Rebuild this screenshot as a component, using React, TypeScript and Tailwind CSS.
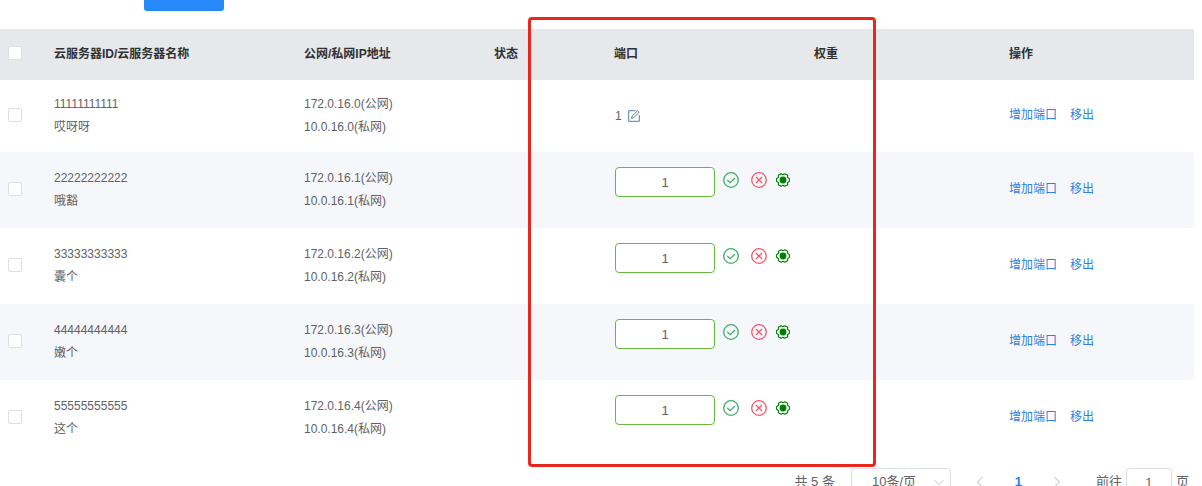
import type { ReactNode } from "react";

type Server = {
  id: string;
  name: string;
  publicIp: string;
  privateIp: string;
  editing: boolean;
};

const SERVERS: Server[] = [
  { id: "11111111111", name: "哎呀呀", publicIp: "172.0.16.0", privateIp: "10.0.16.0", editing: false },
  { id: "22222222222", name: "哦豁", publicIp: "172.0.16.1", privateIp: "10.0.16.1", editing: true },
  { id: "33333333333", name: "囊个", publicIp: "172.0.16.2", privateIp: "10.0.16.2", editing: true },
  { id: "44444444444", name: "嫩个", publicIp: "172.0.16.3", privateIp: "10.0.16.3", editing: true },
  { id: "55555555555", name: "这个", publicIp: "172.0.16.4", privateIp: "10.0.16.4", editing: true },
];

function Checkbox({ label }: { label: string }) {
  return (
    <input
      type="checkbox"
      aria-label={label}
      className="block size-3.5 appearance-none rounded-xs border border-[#dcdfe6] bg-white checked:border-[#2788f8] checked:bg-[#2788f8]"
    />
  );
}

function IconButton({ label, className, children }: { label: string; className: string; children: ReactNode }) {
  return (
    <button type="button" aria-label={label} className={className}>
      {children}
    </button>
  );
}

function EditIcon() {
  return (
    <svg viewBox="0 0 12 12" className="size-3" fill="none" stroke="currentColor">
      <path d="M7.500 .7H.7v10.600h10.600V5" />
      <path d="M3.500 8.500l.6-2.400L9.500.8l1.600 1.500-5.400 5.500z" />
    </svg>
  );
}

function CheckIcon() {
  return (
    <svg viewBox="0 0 16 16" className="size-4" fill="none" stroke="currentColor" strokeWidth="1.3">
      <circle cx="8" cy="8" r="7.300" />
      <path d="M4.300 8l2.900 2.700 4.800-4.700" />
    </svg>
  );
}

function CrossIcon() {
  return (
    <svg viewBox="0 0 16 16" className="size-4" fill="none" stroke="currentColor" strokeWidth="1.3">
      <circle cx="8" cy="8" r="7.300" />
      <path d="M5 5l6 6M11 5l-6 6" />
    </svg>
  );
}

function GearIcon() {
  return (
    <svg viewBox="0 0 16 16" className="size-4" fill="none" stroke="currentColor" strokeWidth="1.1" strokeLinejoin="round">
      <path d="M14.400 6.400v3.200l-1.800 1v2.100l-2.800 1.600L8 13.200l-1.800 1.100-2.800-1.600v-2.100l-1.800-1V6.400l1.800-1V3.300l2.800-1.600L8 2.800l1.800-1.100 2.800 1.600v2.100z" />
      <circle cx="8" cy="8" r="3.400" fill="currentColor" stroke="none" />
    </svg>
  );
}

function PortCell({ server }: { server: Server }) {
  if (!server.editing) {
    return (
      <div className="flex items-center gap-1.5">
        <span>1</span>
        <IconButton label="编辑端口" className="text-[#5580a8]">
          <EditIcon />
        </IconButton>
      </div>
    );
  }

  return (
    <div className="mb-4 flex items-center">
      <input
        type="text"
        defaultValue="1"
        aria-label={`${server.id} 端口`}
        className="h-[30px] w-[100px] rounded border border-[#67b83c] bg-white text-center text-[13px] text-[#606266]"
      />
      <div className="flex items-center pb-1 pl-2">
        <IconButton label="确认" className="mr-3 text-[#3fae68]">
          <CheckIcon />
        </IconButton>
        <IconButton label="取消" className="mr-2 text-[#f5566c]">
          <CrossIcon />
        </IconButton>
        <IconButton label="设置" className="text-[#008000]">
          <GearIcon />
        </IconButton>
      </div>
    </div>
  );
}

function ServerTable() {
  return (
    <table className="w-full table-fixed border-collapse text-left text-xs text-[#606266]">
      <colgroup>
        <col className="w-[44px]" />
        <col className="w-[250px]" />
        <col className="w-[190px]" />
        <col className="w-[120px]" />
        <col className="w-[200px]" />
        <col />
        <col />
      </colgroup>
      <thead className="bg-[#e6e8eb] text-[#303133]">
        <tr className="h-[51px]">
          <th className="pb-1 pl-2">
            <Checkbox label="全选" />
          </th>
          <th className="px-2.5 pb-0.5">云服务器ID/云服务器名称</th>
          <th className="px-2.5 pb-0.5">公网/私网IP地址</th>
          <th className="px-2.5 pb-0.5">状态</th>
          <th className="px-2.5 pb-0.5">端口</th>
          <th className="px-2.5 pb-0.5">权重</th>
          <th className="px-2.5 pb-0.5">操作</th>
        </tr>
      </thead>
      <tbody>
        {SERVERS.map((s) => (
          <tr key={s.id} className={s.editing ? "h-[76px] even:bg-[#f5f7fb]" : "h-[72px]"}>
            <td className="pb-0.5 pl-2">
              <Checkbox label={s.name} />
            </td>
            <td className="px-2.5 leading-[23px]">
              <div>{s.id}</div>
              <div>{s.name}</div>
            </td>
            <td className="px-2.5 leading-[23px]">
              <div>{s.publicIp}(公网)</div>
              <div>{s.privateIp}(私网)</div>
            </td>
            <td />
            <td className="pl-[11px]">
              <PortCell server={s} />
            </td>
            <td />
            <td className="px-2.5 pb-0.5">
              <div className="flex gap-[13px] text-[#2f80e4]">
                <a href="#add-port">增加端口</a>
                <a href="#remove">移出</a>
              </div>
            </td>
          </tr>
        ))}
      </tbody>
    </table>
  );
}

function Chevron({ d, className }: { d: string; className: string }) {
  return (
    <svg viewBox="0 0 12 12" className={className} fill="none" stroke="currentColor">
      <path d={d} />
    </svg>
  );
}

function Pagination() {
  return (
    <nav aria-label="分页" className="mt-3 flex items-center justify-end pr-[5px] text-[13px] text-[#606266]">
      <span className="mr-4">共 5 条</span>
      <div className="relative">
        <select
          aria-label="每页条数"
          className="h-7 w-[100px] appearance-none rounded-[3px] border border-[#dcdfe6] bg-white pl-5"
        >
          <option>10条/页</option>
          <option>20条/页</option>
        </select>
        <Chevron d="M1.500 4l4.500 4.500L10.500 4" className="pointer-events-none absolute top-2 right-1.5 size-3 text-[#c0c4cc]" />
      </div>
      <IconButton label="上一页" className="ml-[23px] text-[#b4b8bf]">
        <Chevron d="M8.500 1L3.500 6l5 5" className="size-3" />
      </IconButton>
      <button type="button" aria-current="page" className="w-[65px] font-bold text-[#2f80e4]">
        1
      </button>
      <IconButton label="下一页" className="mr-[33px] text-[#b4b8bf]">
        <Chevron d="M3.500 1l5 5-5 5" className="size-3" />
      </IconButton>
      <label className="flex items-center gap-1">
        前往
        <input
          type="text"
          defaultValue="1"
          className="h-7 w-[46px] rounded-[3px] border border-[#dcdfe6] bg-white text-center"
        />
        页
      </label>
    </nav>
  );
}

export default function App() {
  return (
    <main className="relative bg-white pr-2 font-['Liberation_Sans','Noto_Sans_CJK_SC',sans-serif]">
      <div className="flex h-[11px] items-end overflow-hidden pl-36">
        <button type="button" aria-label="添加" className="h-8 w-20 shrink-0 rounded-[3px] bg-[#2788f8]" />
      </div>
      <div className="mt-[18px]">
        <ServerTable />
      </div>
      <Pagination />
      <div className="pointer-events-none absolute top-[17px] left-[528px] h-[450px] w-[348px] rounded border-3 border-[#e8281e]" />
    </main>
  );
}
